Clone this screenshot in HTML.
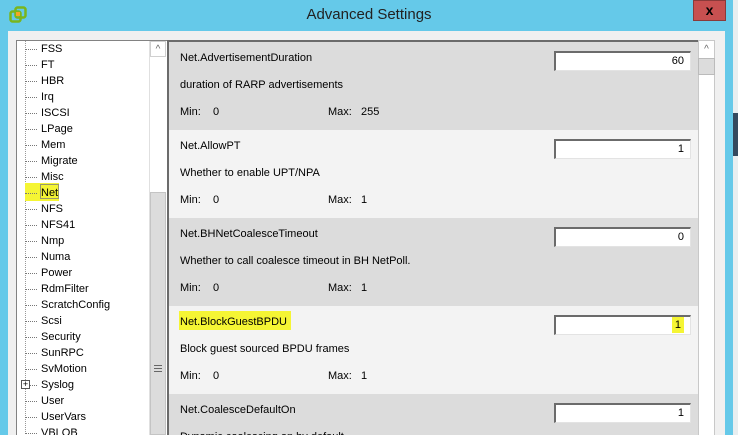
<!DOCTYPE html>
<html><head><style>
*{margin:0;padding:0;box-sizing:border-box}
html,body{width:738px;height:435px;overflow:hidden}
body{background:#f0f0f0;font-family:"Liberation Sans",sans-serif;font-size:11px;color:#000;position:relative}
#w{position:absolute;left:0;top:0;width:738px;height:435px;overflow:hidden}
.abs{position:absolute}
.title{left:0;top:0;width:733px;height:31px;background:#65c9e9}
.tree{left:16px;top:40px;width:151px;height:395px;background:#fff;border:1px solid #828282;border-right:none;border-bottom:none}
.ti{position:absolute;left:24px;font-size:11px;line-height:16px}
.dots{position:absolute;left:8px;width:12px;border-top:1px dotted #777}
.vline{position:absolute;left:8px;top:0;height:395px;border-left:1px dotted #999}
.row{position:absolute;left:169px;width:529px;height:88px}
.row .l{position:absolute;left:11px;top:10px}
.row .d{position:absolute;left:11px;top:37px}
.row .m{position:absolute;left:11px;top:64px}
.row .x{position:absolute;left:159px;top:64px}
.box{position:absolute;left:385px;top:9px;width:137px;height:20px;background:#fff;border-top:2px solid #6b6b6b;border-left:2px solid #6b6b6b;border-right:1px solid #e3e3e3;border-bottom:1px solid #e3e3e3;text-align:right;padding-right:6px;line-height:17px}
</style></head><body><div id="w">
<div class="abs title"></div>
<div class="abs" style="left:0;top:31px;width:8px;height:404px;background:#65c9e9"></div>
<div class="abs" style="left:725px;top:0;width:8px;height:435px;background:#65c9e9"></div>
<div class="abs" style="left:733px;top:0;width:5px;height:435px;background:#e8eef0"></div>
<div class="abs" style="left:733px;top:113px;width:5px;height:43px;background:#34495e"></div>
<svg class="abs" style="left:9px;top:6px" width="18" height="18" viewBox="0 0 18 18"><rect x="1.5" y="5.5" width="10" height="10" rx="2" fill="none" stroke="#7ab51d" stroke-width="2.5"/><rect x="6.5" y="1.5" width="10" height="10" rx="2" fill="none" stroke="#7ab51d" stroke-width="2.5"/><rect x="7" y="6" width="4" height="4" fill="#f5a623"/></svg>
<div class="abs" style="left:0;top:6px;width:738px;text-align:center;font-size:15px;color:#222">Advanced Settings</div>
<div class="abs" style="left:693px;top:0;width:33px;height:21px;background:#c75050;border:1px solid #8a3a3a;color:#000;font-weight:bold;font-size:14px;text-align:center;line-height:18px">x</div>

<div class="abs tree">
<div class="vline"></div>
<div class="abs" style="left:8px;top:142px;width:34px;height:18px;background:#f5f534"></div>
<div class="abs" style="left:23px;top:143px;width:19px;height:15px;border:1px solid #9a9a6a"></div>
</div>
<div class="abs" style="left:17px;top:41px;width:133px;height:394px;overflow:hidden">
<div class="ti" style="top:0">FSS</div><div class="dots" style="top:8px"></div>
<div class="ti" style="top:16px">FT</div><div class="dots" style="top:24px"></div>
<div class="ti" style="top:32px">HBR</div><div class="dots" style="top:40px"></div>
<div class="ti" style="top:48px">Irq</div><div class="dots" style="top:56px"></div>
<div class="ti" style="top:64px">ISCSI</div><div class="dots" style="top:72px"></div>
<div class="ti" style="top:80px">LPage</div><div class="dots" style="top:88px"></div>
<div class="ti" style="top:96px">Mem</div><div class="dots" style="top:104px"></div>
<div class="ti" style="top:112px">Migrate</div><div class="dots" style="top:120px"></div>
<div class="ti" style="top:128px">Misc</div><div class="dots" style="top:136px"></div>
<div class="ti" style="top:144px">Net</div><div class="dots" style="top:152px"></div>
<div class="ti" style="top:160px">NFS</div><div class="dots" style="top:168px"></div>
<div class="ti" style="top:176px">NFS41</div><div class="dots" style="top:184px"></div>
<div class="ti" style="top:192px">Nmp</div><div class="dots" style="top:200px"></div>
<div class="ti" style="top:208px">Numa</div><div class="dots" style="top:216px"></div>
<div class="ti" style="top:224px">Power</div><div class="dots" style="top:232px"></div>
<div class="ti" style="top:240px">RdmFilter</div><div class="dots" style="top:248px"></div>
<div class="ti" style="top:256px">ScratchConfig</div><div class="dots" style="top:264px"></div>
<div class="ti" style="top:272px">Scsi</div><div class="dots" style="top:280px"></div>
<div class="ti" style="top:288px">Security</div><div class="dots" style="top:296px"></div>
<div class="ti" style="top:304px">SunRPC</div><div class="dots" style="top:312px"></div>
<div class="ti" style="top:320px">SvMotion</div><div class="dots" style="top:328px"></div>
<div class="ti" style="top:336px">Syslog</div><div class="dots" style="top:344px"></div>
<div class="abs" style="left:4px;top:339px;width:9px;height:9px;border:1px solid #555;background:#fff;font-size:9px;line-height:7px;text-align:center">+</div>
<div class="ti" style="top:352px">User</div><div class="dots" style="top:360px"></div>
<div class="ti" style="top:368px">UserVars</div><div class="dots" style="top:376px"></div>
<div class="ti" style="top:384px">VBLOB</div><div class="dots" style="top:392px"></div>
</div>
<div class="abs" style="left:149px;top:41px;width:17px;height:394px;background:#fff;border-left:1px solid #e0e0e0"></div>
<div class="abs" style="left:150px;top:41px;width:16px;height:16px;border:1px solid #d0d0d0;text-align:center;color:#666;font-size:10px;line-height:16px">^</div>
<div class="abs" style="left:150px;top:192px;width:16px;height:243px;background:#dcdcdc;border:1px solid #c4c4c4"></div>
<div class="abs" style="left:154px;top:365px;width:8px;height:7px;border-top:1px solid #666;border-bottom:1px solid #666"><div style="margin-top:2px;border-top:1px solid #666"></div></div>

<div class="abs" style="left:167px;top:40px;width:532px;height:395px;border-left:2px solid #6b6b6b;border-top:2px solid #6b6b6b;background:#dcdcdc"></div>
<div class="row" style="top:42px;background:#dcdcdc"><span class="l">Net.AdvertisementDuration</span><span class="d">duration of RARP advertisements</span><span class="m">Min:&nbsp;&nbsp;&nbsp;&nbsp;0</span><span class="x">Max:&nbsp;&nbsp;&nbsp;255</span><div class="box">60</div></div>
<div class="row" style="top:130px;background:#f3f3f3"><span class="l">Net.AllowPT</span><span class="d">Whether to enable UPT/NPA</span><span class="m">Min:&nbsp;&nbsp;&nbsp;&nbsp;0</span><span class="x">Max:&nbsp;&nbsp;&nbsp;1</span><div class="box">1</div></div>
<div class="row" style="top:218px;background:#dcdcdc"><span class="l">Net.BHNetCoalesceTimeout</span><span class="d">Whether to call coalesce timeout in BH NetPoll.</span><span class="m">Min:&nbsp;&nbsp;&nbsp;&nbsp;0</span><span class="x">Max:&nbsp;&nbsp;&nbsp;1</span><div class="box">0</div></div>
<div class="row" style="top:306px;background:#f3f3f3"><div class="abs" style="left:10px;top:5px;width:112px;height:19px;background:#f5f534"></div><span class="l">Net.BlockGuestBPDU</span><span class="d">Block guest sourced BPDU frames</span><span class="m">Min:&nbsp;&nbsp;&nbsp;&nbsp;0</span><span class="x">Max:&nbsp;&nbsp;&nbsp;1</span><div class="box"><span style="background:#f5f534;padding:2px 3px">1</span></div></div>
<div class="row" style="top:394px;height:41px;overflow:hidden;background:#dcdcdc"><span class="l">Net.CoalesceDefaultOn</span><span class="d">Dynamic coalescing on by default</span><div class="box">1</div></div>
<div class="abs" style="left:698px;top:40px;width:17px;height:395px;background:#fff;border:1px solid #c8c8c8;border-bottom:none"></div>
<div class="abs" style="left:699px;top:41px;width:15px;height:17px;text-align:center;color:#666;font-size:10px;line-height:17px">^</div>
<div class="abs" style="left:698px;top:58px;width:17px;height:17px;background:#dcdcdc;border:1px solid #bbb"></div>
</div></body></html>
